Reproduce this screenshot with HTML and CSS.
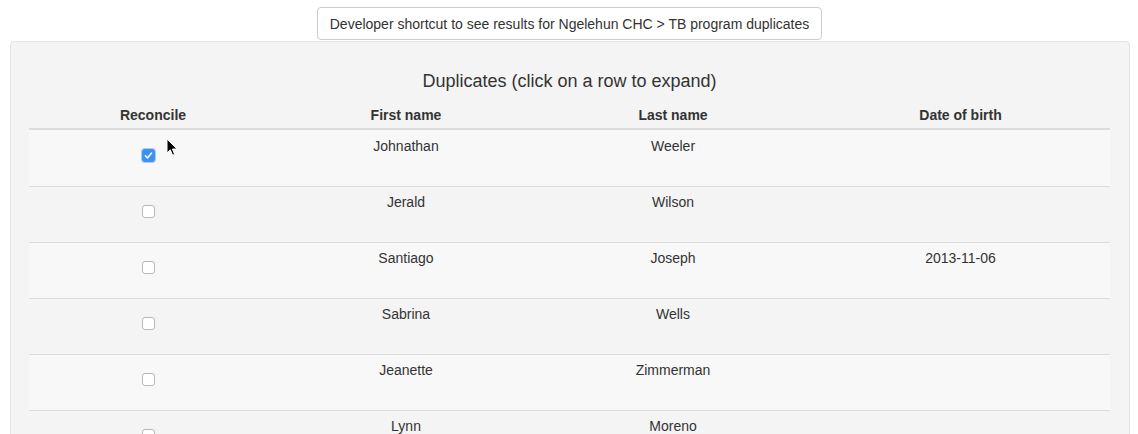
FILE: index.html
```html
<!DOCTYPE html>
<html>
<head>
<meta charset="utf-8">
<link rel="stylesheet" href="styles.css">
</head>
<body>
<div class="top">
  <button class="dev-btn">Developer shortcut to see results for Ngelehun CHC &gt; TB program duplicates</button>
</div>
<div class="panel">
  <h3 class="title">Duplicates (click on a row to expand)</h3>
  <table class="dups">
    <colgroup>
      <col class="c1"><col class="c2"><col class="c3"><col class="c4">
    </colgroup>
    <thead>
      <tr><th>Reconcile</th><th>First name</th><th>Last name</th><th>Date of birth</th></tr>
    </thead>
    <tbody>
      <tr><td><span class="cb checked"><svg viewBox="0 0 13 13" width="13" height="13"><path d="M3.4 6.8 L5.5 8.9 L9.6 4.1" fill="none" stroke="#fff" stroke-width="1.5" stroke-linecap="round" stroke-linejoin="round"/></svg></span></td><td>Johnathan</td><td>Weeler</td><td></td></tr>
      <tr><td><span class="cb"></span></td><td>Jerald</td><td>Wilson</td><td></td></tr>
      <tr><td><span class="cb"></span></td><td>Santiago</td><td>Joseph</td><td>2013-11-06</td></tr>
      <tr><td><span class="cb"></span></td><td>Sabrina</td><td>Wells</td><td></td></tr>
      <tr><td><span class="cb"></span></td><td>Jeanette</td><td>Zimmerman</td><td></td></tr>
      <tr><td><span class="cb"></span></td><td>Lynn</td><td>Moreno</td><td></td></tr>
    </tbody>
  </table>
</div>
<svg class="cursor" width="12" height="19" viewBox="0 0 12 19"><path d="M1 1 L1 15 L4.3 11.8 L6.6 17.2 L8.6 16.3 L6.4 11 L11 11 Z" fill="#000" stroke="#fff" stroke-width="1"/></svg>
</body>
</html>
```
FILE: styles.css
```css
html, body {
  margin: 0;
  padding: 0;
  background: #fff;
  font-family: "Liberation Sans", Arial, sans-serif;
  color: #333;
  overflow: hidden;
  height: 434px;
}
body {
  position: relative;
}
.top {
  display: flex;
  justify-content: center;
  padding-top: 7px;
  padding-left: 1px;
}
.dev-btn {
  font-family: "Liberation Sans", Arial, sans-serif;
  font-size: 14px;
  color: #333;
  background: #fff;
  border: 1px solid #ccc;
  border-radius: 4px;
  height: 33px;
  width: 505px;
  padding: 0;
  white-space: nowrap;
  cursor: pointer;
}
.panel {
  margin: 1px 8px 0 10px;
  background: #f4f4f4;
  border: 1px solid #e3e3e3;
  border-radius: 4px;
  padding: 20px 19px 0 18px;
  height: 420px;
  box-sizing: border-box;
}
.title {
  margin: 6px 0 0 0;
  text-align: center;
  font-weight: normal;
  font-size: 18px;
  line-height: 26px;
  color: #333;
}
.dups {
  width: 1081px;
  border-collapse: collapse;
  margin-top: 11px;
  font-size: 14px;
}
.c1 { width: 248px; }
.c2 { width: 258px; }
.c3 { width: 276px; }
.c4 { width: 299px; }
.dups th {
  font-weight: bold;
  text-align: center;
  padding: 0 8px 3px;
  line-height: 20px;
  border-bottom: 2px solid #dcdcdc;
}
.dups td {
  text-align: center;
  vertical-align: top;
  padding: 5px 8px 0;
  height: 50px;
  line-height: 20px;
  border-top: 1px solid #dcdcdc;
}
.dups thead + tbody tr:first-child td {
  border-top: 0;
  padding-top: 6px;
  height: 50px;
}
.dups tbody tr:nth-child(odd) td {
  background: #f8f8f8;
}
.cb {
  display: inline-block;
  width: 11px;
  height: 11px;
  margin-top: 13px;
  margin-left: -9px;
  border: 1px solid #b8b8b8;
  border-radius: 3px;
  background: #fff;
  vertical-align: top;
  position: relative;
}
.cb.checked {
  background: #3c92f0;
  border-color: #3c92f0;
  box-shadow: 0 0 0 1px #a9cdf7;
}
.cb svg {
  position: absolute;
  left: -1px;
  top: -1px;
}
.cursor {
  position: absolute;
  left: 166px;
  top: 138px;
}
```
